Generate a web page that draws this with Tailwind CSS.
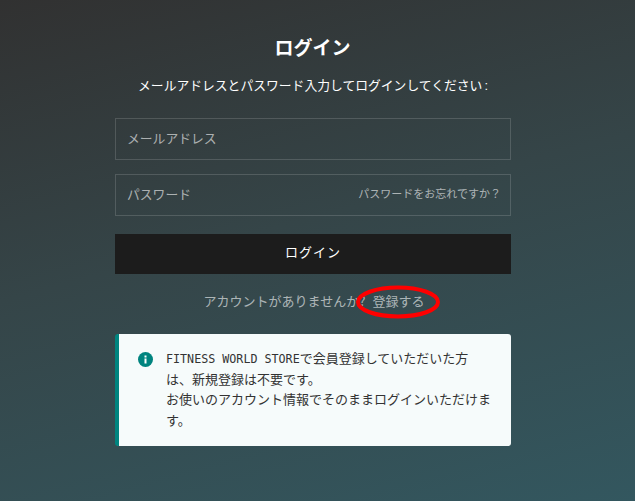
<!DOCTYPE html>
<html lang="ja"><head><meta charset="utf-8"><script src="https://cdn.jsdelivr.net/npm/@tailwindcss/browser@4"></script></head>
<body class="m-0">
<div class="relative w-[635px] h-[501px] overflow-hidden bg-[linear-gradient(165deg,#313131_0%,#354548_45%,#33575f_100%)] font-['Noto_Sans_CJK_JP',sans-serif] text-white">
  <div class="w-[396px] ml-[115px] pt-[34px] flex flex-col">
    <h1 class="text-center text-[19px] leading-[26px] font-bold pr-[1px]">ログイン</h1>
    <p class="text-center text-[12.8px] leading-[20px] mt-[15px]">メールアドレスとパスワード入力してログインしてください<span class="font-['Liberation_Sans'] ml-[2px]">:</span></p>
    <div class="mt-[22px] h-[42px] border border-white/15 flex items-center px-[11px] pb-[3px] text-[12.8px] text-white/60">メールアドレス</div>
    <div class="mt-[14px] h-[42px] border border-white/15 flex items-center justify-between pl-[11px] pr-[9px] pb-[3px] text-[12.8px] text-white/60"><span>パスワード</span><span class="text-[11px]">パスワードをお忘れですか？</span></div>
    <div class="mt-[18px] h-[40px] bg-[#1c1c1c] flex items-center justify-center pb-[5px] text-[13px] tracking-[1px]">ログイン</div>
    <div class="mt-[17px] pl-[2px] text-center text-[13px] leading-[20px] text-white/60"><span>アカウントがありませんか?</span><span class="ml-[7px]">登録する</span></div>
    <div class="mt-[23px] h-[112px] bg-[#f6fbfb] rounded-[3px] border-l-[4px] border-l-[#00847f] pl-[19px] pr-[16px] pt-[14px] flex gap-[13px] text-[#333] text-[13px] leading-[20.5px]">
      <svg class="w-[15px] h-[15px] mt-[4px] shrink-0" viewBox="0 0 15 15"><circle cx="7.5" cy="7.5" r="7.5" fill="#00847f"/><rect x="6.5" y="6.5" width="2" height="5" fill="#fff"/><rect x="6.5" y="3.5" width="2" height="2" fill="#fff"/></svg>
      <div class="w-[326px]">
        <div><span class="font-['DejaVu_Sans_Mono'] text-[11.7px] leading-none">FITNESS WORLD STORE</span><span>で会員登録していただいた方</span></div>
        <div>は、新規登録は不要です。</div>
        <div>お使いのアカウント情報でそのままログインいただけま</div>
        <div>す。</div>
      </div>
    </div>
  </div>
  <svg class="absolute left-[355px] top-[284px] w-[86px] h-[36px]" viewBox="0 0 86 36"><ellipse cx="43" cy="18" rx="40" ry="14.5" fill="none" stroke="#f00" stroke-width="4"/></svg>
</div>
</body></html>
